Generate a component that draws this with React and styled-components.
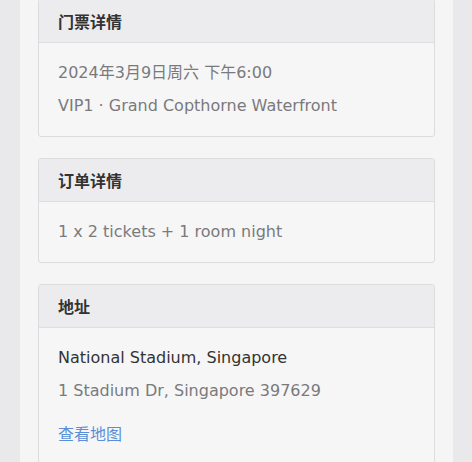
import React from "react";
import styled, {createGlobalStyle} from "styled-components";

const GlobalStyle = createGlobalStyle`
  html, body {
    margin: 0;
    padding: 0;
    background: #e9e9eb;
  }
  body {
    font-family: "DejaVu Sans", "Noto Sans CJK SC", sans-serif;
  }
`;

const Page = styled.div`
  width: 433px;
  margin: 0 0 0 20px;
  min-height: 462px;
  background: #f5f5f6;
  padding: 0 18px;
  box-sizing: border-box;
  display: flex;
  flex-direction: column;
  gap: 21px;
`;

const Card = styled.section`
  border: 1px solid #dcdcde;
  border-radius: 3px;
  background: #f6f6f7;
  overflow: hidden;
  &:first-child {
    margin-top: -1px;
  }
`;

const CardHeader = styled.div`
  height: 42px;
  display: flex;
  align-items: center;
  padding: 0 19px;
  background: #ececee;
  border-bottom: 1px solid #dedee0;
  font-family: "Noto Sans CJK SC", sans-serif;
  font-size: 16px;
  font-weight: 700;
  color: #333;
`;

const CardBody = styled.div`
  padding: 18px 19px;
  display: flex;
  flex-direction: column;
  gap: 9px;
`;

const Line = styled.div`
  font-size: 16px;
  line-height: 24px;
  color: ${p => (p.$strong ? "#333" : "#7a7a7c")};
`;

const MapLink = styled.a`
  margin-top: 9px;
  font-family: "Noto Sans CJK SC", sans-serif;
  font-size: 16px;
  line-height: 24px;
  color: #5b8ed8;
  text-decoration: none;
`;

export default function App() {
  return (
    <>
      <GlobalStyle />
      <Page>
        <Card>
          <CardHeader>门票详情</CardHeader>
          <CardBody>
            <Line>2024年3月9日周六 下午6:00</Line>
            <Line>VIP1 · Grand Copthorne Waterfront</Line>
          </CardBody>
        </Card>
        <Card>
          <CardHeader>订单详情</CardHeader>
          <CardBody>
            <Line>1 x 2 tickets + 1 room night</Line>
          </CardBody>
        </Card>
        <Card>
          <CardHeader>地址</CardHeader>
          <CardBody>
            <Line $strong>National Stadium, Singapore</Line>
            <Line>1 Stadium Dr, Singapore 397629</Line>
            <MapLink href="#">查看地图</MapLink>
          </CardBody>
        </Card>
      </Page>
    </>
  );
}
